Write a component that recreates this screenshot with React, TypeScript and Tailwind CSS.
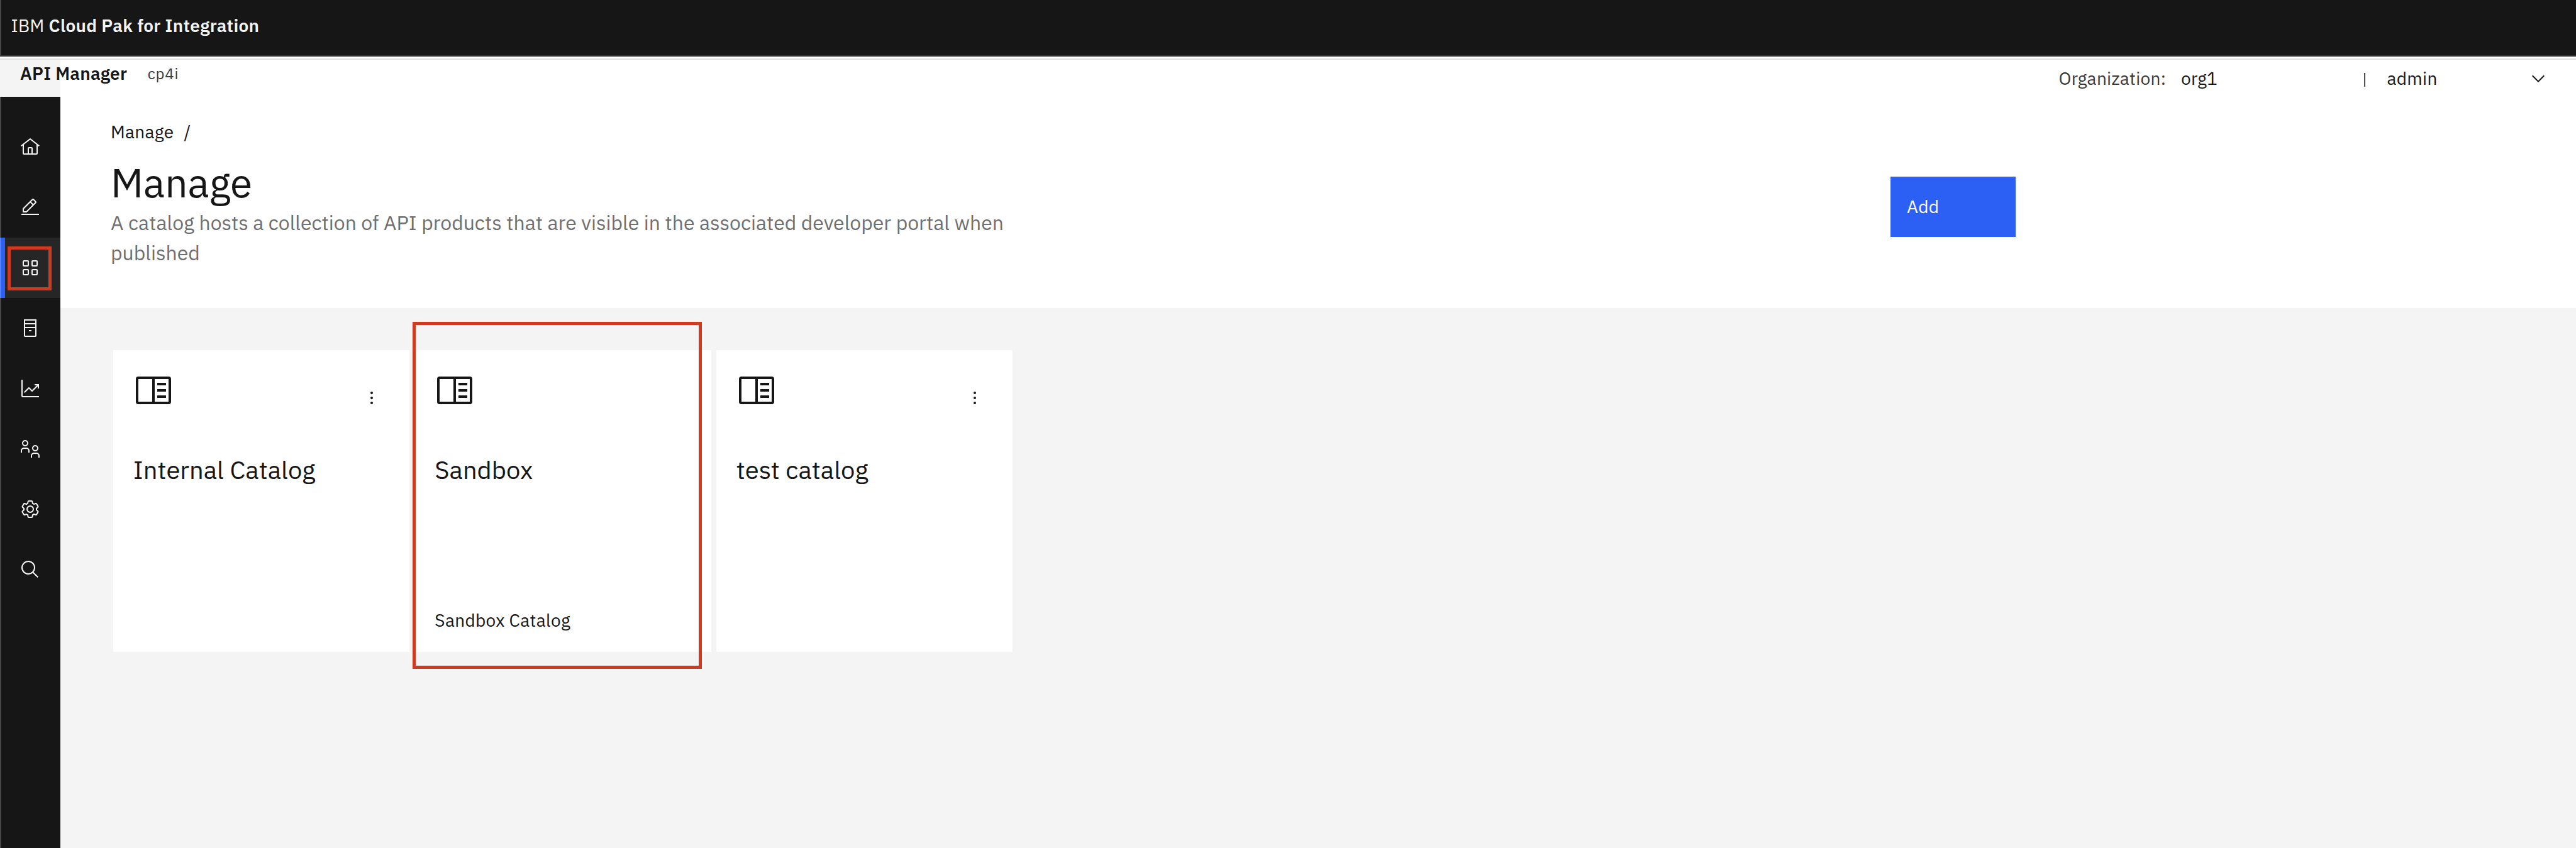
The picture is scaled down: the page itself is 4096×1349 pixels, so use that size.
import type { ReactNode } from "react";

const RED_BORDER = "pointer-events-none absolute border-[5px] border-[#d03a20]";

function NavItem({ active, label, children }: { active?: boolean; label: string; children: ReactNode }) {
  return (
    <a
      aria-label={label}
      className={
        active
          ? "relative flex h-24 w-full items-center justify-center bg-[#262626]"
          : "relative flex h-24 w-full items-center justify-center"
      }
    >
      {active && <span className="absolute inset-y-0 left-0 w-2 border-l-2 border-[#5882f7] bg-[#2c60f5]" />}
      <svg viewBox="0 0 32 32" className="size-8 fill-[#f4f4f4]">
        {children}
      </svg>
      {active && <span className={`${RED_BORDER} left-3 top-[14px] size-[70px]`} />}
    </a>
  );
}

function Sidebar() {
  return (
    <aside className="relative flex w-24 shrink-0 flex-col bg-[#161616] pt-8">
      <span className="absolute inset-y-0 left-0 w-0.5 bg-[#474747]" />
      <NavItem label="Home">
        <path d="M16.6123,2.2138a1.01,1.01,0,0,0-1.2427,0L1,13.4194l1.2427,1.5717L4,13.6208V26a2.0041,2.0041,0,0,0,2,2H26a2.0037,2.0037,0,0,0,2-2V13.63L29.7573,15,31,13.4282ZM18,26H14V18h4Zm2,0V18a2.0023,2.0023,0,0,0-2-2H14a2.002,2.002,0,0,0-2,2v8H6V12.0615l10-7.79,10,7.8005V26Z" />
      </NavItem>
      <NavItem label="Develop">
        <path d="M2 26H30V28H2zM25.4 9c.8-.8.8-2 0-2.8l-3.6-3.6c-.8-.8-2-.8-2.8 0l-15 15V24h6.4L25.4 9zM20.4 4L24 7.6l-3 3L17.4 7 20.4 4zM6 22v-3.6l10-10 3.6 3.6-10 10H6z" />
      </NavItem>
      <NavItem label="Manage" active>
        <g className="fill-none stroke-[#f4f4f4] stroke-2">
          <rect x="5" y="5" width="8" height="8" rx="1" />
          <rect x="19" y="5" width="8" height="8" rx="1" />
          <rect x="5" y="19" width="8" height="8" rx="1" />
          <rect x="19" y="19" width="8" height="8" rx="1" />
        </g>
      </NavItem>
      <NavItem label="Resources">
        <path d="M6 2H26V28a2 2 0 0 1-2 2H8a2 2 0 0 1-2-2zM8 4V8H24V4zM8 10V14H24V10zM8 16V28H24V16z" fillRule="evenodd" />
        <path d="M14 19H18V21H14z" />
      </NavItem>
      <NavItem label="Analytics">
        <path d="M4,2H2V28a2,2,0,0,0,2,2H30V28H4Z" />
        <path d="M30,9H23v2h3.59L19,18.59l-4.29-4.3a1,1,0,0,0-1.42,0L6,21.59,7.41,23,14,16.41l4.29,4.3a1,1,0,0,0,1.42,0L28,12.41V16h2Z" />
      </NavItem>
      <NavItem label="Members">
        <g className="fill-none stroke-[#f4f4f4] stroke-2">
          <circle cx="8" cy="7" r="4" />
          <path d="M2 22V19a4 4 0 0 1 4-4h4a4 4 0 0 1 4 4v3" />
          <circle cx="24" cy="15" r="4" />
          <path d="M18 30V27a4 4 0 0 1 4-4h4a4 4 0 0 1 4 4v3" />
        </g>
      </NavItem>
      <NavItem label="Settings">
        <path d="M27,16.76c0-.25,0-.5,0-.76s0-.51,0-.77l1.92-1.68A2,2,0,0,0,29.3,11L26.94,7a2,2,0,0,0-1.73-1,2,2,0,0,0-.64.1l-2.43.82a11.35,11.35,0,0,0-1.31-.75l-.51-2.52a2,2,0,0,0-2-1.61H13.64a2,2,0,0,0-2,1.61l-.51,2.52a11.48,11.48,0,0,0-1.32.75L7.43,6.06A2,2,0,0,0,6.79,6,2,2,0,0,0,5.06,7L2.7,11a2,2,0,0,0,.41,2.51L5,15.24c0,.25,0,.5,0,.76s0,.51,0,.77L3.11,18.45A2,2,0,0,0,2.7,21L5.06,25a2,2,0,0,0,1.73,1,2,2,0,0,0,.64-.1l2.43-.82a11.35,11.35,0,0,0,1.31.75l.51,2.52a2,2,0,0,0,2,1.61h4.72a2,2,0,0,0,2-1.61l.51-2.52a11.48,11.48,0,0,0,1.32-.75l2.42.82a2,2,0,0,0,.64.1,2,2,0,0,0,1.73-1L29.3,21a2,2,0,0,0-.41-2.51ZM25.21,24l-3.43-1.16a8.86,8.86,0,0,1-2.71,1.57L18.36,28H13.64l-.71-3.55a9.36,9.36,0,0,1-2.7-1.57L6.79,24,4.43,20l2.72-2.4a8.9,8.9,0,0,1,0-3.13L4.43,12,6.79,8l3.43,1.16a8.86,8.86,0,0,1,2.71-1.57L13.64,4h4.72l.71,3.55a9.36,9.36,0,0,1,2.7,1.57L25.21,8,27.57,12l-2.72,2.4a8.9,8.9,0,0,1,0,3.13L27.57,20Z" />
        <path d="M16,22a6,6,0,1,1,6-6A5.94,5.94,0,0,1,16,22Zm0-10a3.91,3.91,0,0,0-4,4,3.91,3.91,0,0,0,4,4,3.91,3.91,0,0,0,4-4A3.91,3.91,0,0,0,16,12Z" />
      </NavItem>
      <NavItem label="Search">
        <path d="M29,27.5859l-7.5521-7.5521a11.0177,11.0177,0,1,0-1.4141,1.4141L27.5859,29ZM4,13a9,9,0,1,1,9,9A9.01,9.01,0,0,1,4,13Z" />
      </NavItem>
    </aside>
  );
}

interface Catalog {
  title: string;
  description?: string;
  menu: boolean;
  highlighted?: boolean;
}

const CATALOGS: Catalog[] = [
  { title: "Internal Catalog", menu: true },
  { title: "Sandbox", description: "Sandbox Catalog", menu: false, highlighted: true },
  { title: "test catalog", menu: true },
];

function CatalogCard({ title, description, menu, highlighted }: Catalog) {
  return (
    <article className="relative flex h-[480px] w-[471.5px] flex-col bg-white p-8">
      <div className="flex items-start justify-between">
        <svg viewBox="0 0 32 32" className="size-16 fill-[#161616]">
          <path d="M4 5H28a2 2 0 0 1 2 2V25a2 2 0 0 1-2 2H4a2 2 0 0 1-2-2V7a2 2 0 0 1 2-2zM4 7V25H15V7zM17 7V25H28V7z" fillRule="evenodd" />
          <path d="M19 10H26V12H19zM19 15H26V17H19zM19 20H26V22H19z" />
        </svg>
        {menu && (
          <svg viewBox="0 0 32 32" className="mr-3 mt-7 size-8 fill-[#161616]">
            <circle cx="16" cy="8" r="2" />
            <circle cx="16" cy="16" r="2" />
            <circle cx="16" cy="24" r="2" />
          </svg>
        )}
      </div>
      <h2 className="mt-[68px] text-[40px] leading-[52px]">{title}</h2>
      {description && <p className="mt-auto text-[28px] leading-[37px] tracking-[0.32px]">{description}</p>}
      {highlighted && <span className={`${RED_BORDER} -left-[3px] -top-[45px] h-[552px] w-[460px]`} />}
    </article>
  );
}

export default function App() {
  return (
    <div className="flex h-[1349px] w-[4096px] flex-col overflow-hidden whitespace-nowrap bg-white font-['IBM_Plex_Sans','Open_Sans',sans-serif] text-[28px] leading-[37px] tracking-[0.32px] text-[#161616]">
      <header className="relative h-[90px] shrink-0 border-b-2 border-[#393939] bg-[#161616] pl-[17.5px] pt-[22px] text-[#f4f4f4]">
        <span className="absolute inset-y-0 left-0 w-0.5 bg-[#474747]" />
        IBM <span className="font-semibold">Cloud Pak for Integration</span>
      </header>

      <div className="relative mt-[3px] flex h-[61px] shrink-0 items-start border-t-2 border-[#e0e0e0]">
        <span className="absolute inset-y-0 left-0 w-24 bg-[#f4f4f4]" />
        <span className="relative ml-8 mt-[3px] font-semibold tracking-[0.24px]">API Manager</span>
        <span className="ml-[32.5px] mt-1.5 text-[24px] leading-8 tracking-[0.8px] text-[#393939]">cp4i</span>
        <div className="ml-auto mt-[11px] flex w-[822.5px] items-start">
          <span className="w-[194.5px] text-[#393939]">Organization:</span>
          <span className="w-[290.5px]">org1</span>
          <span className="mt-2.5 h-[22px] w-0.5 bg-[#525252]" />
          <span className="ml-[35px] w-[224.5px]">admin</span>
          <svg viewBox="0 0 16 16" className="mt-[3px] size-8 fill-[#161616]">
            <path d="M8 11 3 6 3.7 5.3 8 9.6 12.3 5.3 13 6z" />
          </svg>
        </div>
      </div>

      <div className="flex min-h-0 flex-1">
        <Sidebar />
        <main className="flex flex-1 flex-col bg-[#f4f4f4]">
          <section className="flex h-[336px] shrink-0 items-start bg-white pl-20">
            <div className="w-[2830px] pt-[37px]">
              <nav className="flex gap-4">
                <span>Manage</span>
                <span>/</span>
              </nav>
              <h1 className="mt-[22px] text-[64px] leading-[80px] tracking-normal">Manage</h1>
              <p className="w-[1440px] whitespace-normal text-[31.97px] leading-[48px] tracking-normal text-[#6f6f6f]">
                A catalog hosts a collection of API products that are visible in the associated developer portal when
                published
              </p>
            </div>
            <button className="mt-[127px] flex h-24 w-[199px] items-start bg-[#2c60f5] pl-[26px] pt-[29px] text-white">
              Add
            </button>
          </section>
          <section className="flex gap-2 pl-[83.8px] pt-[67px] tracking-normal">
            {CATALOGS.map((c) => (
              <CatalogCard key={c.title} {...c} />
            ))}
          </section>
        </main>
      </div>
    </div>
  );
}
